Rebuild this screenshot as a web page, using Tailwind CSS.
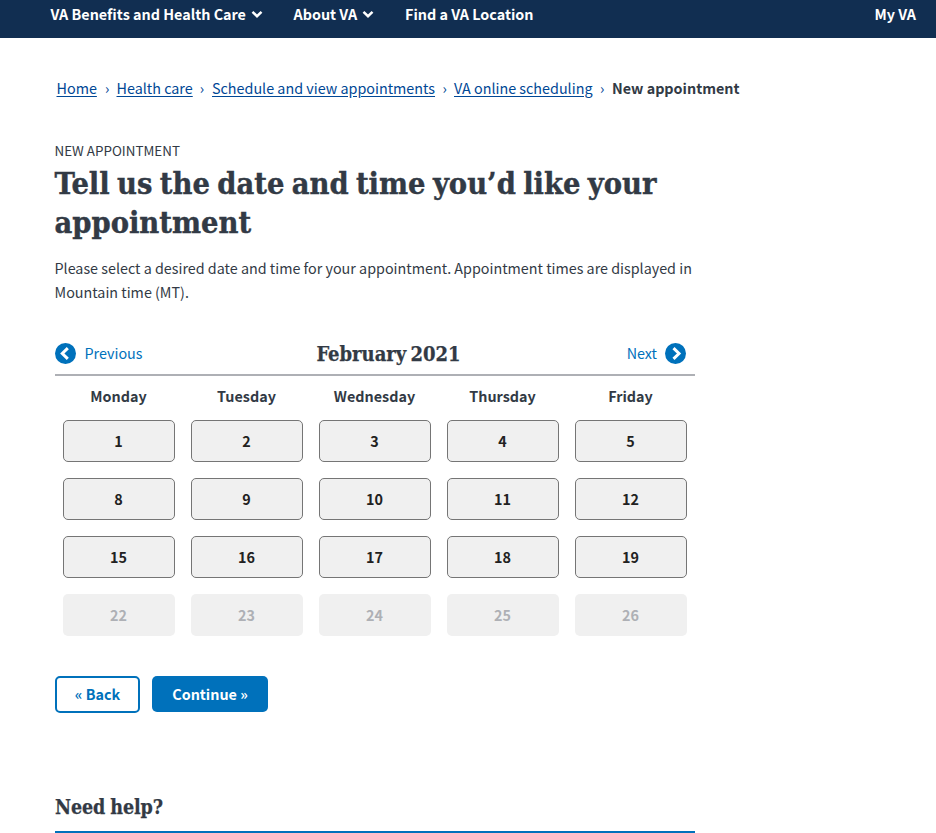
<!DOCTYPE html>
<html lang="en">
<head>
<meta charset="utf-8">
<title>New appointment</title>
<script src="https://cdn.jsdelivr.net/npm/@tailwindcss/browser@4"></script>
</head>
<body class="h-[833px] overflow-hidden bg-white font-['Noto_Sans_CJK_JP','Noto_Sans',sans-serif] text-[14.35px] leading-6 text-[#323a45]">
<header class="flex h-[38px] items-start bg-[#112e51] pl-[50.5px] pr-5 pt-[2px] font-bold text-white whitespace-nowrap">
  <nav class="flex flex-1">
    <a class="flex w-[243px] items-center"><span>VA Benefits and Health Care</span><svg class="ml-[5px] h-3 w-3" viewBox="0 0 12 12" fill="none" stroke="currentColor" stroke-width="2.5"><path d="M1.500 3.800 6 8.200l4.500-4.400"/></svg></a>
    <a class="flex w-[111.5px] items-center"><span>About VA</span><svg class="ml-[4.5px] h-3 w-3" viewBox="0 0 12 12" fill="none" stroke="currentColor" stroke-width="2.5"><path d="M1.500 3.800 6 8.200l4.500-4.400"/></svg></a>
    <a>Find a VA Location</a>
  </nav>
  <a>My VA</a>
</header>
<nav class="flex pl-[56.5px] pt-[38px] text-[#004795] whitespace-nowrap">
  <a class="w-[60px]"><span class="underline underline-offset-2">Home</span><span class="ml-2">›</span></a>
  <a class="w-[95.5px]"><span class="underline underline-offset-2">Health care</span><span class="ml-[7px]">›</span></a>
  <a class="w-[242px]"><span class="underline underline-offset-2">Schedule and view appointments</span><span class="ml-[7.5px]">›</span></a>
  <a class="w-[158px]"><span class="underline underline-offset-2">VA online scheduling</span><span class="ml-[7.5px]">›</span></a>
  <span class="font-bold text-[#323a45]">New appointment</span>
</nav>
<main class="ml-[55px] w-[640px] pt-[38px]">
  <p class="-ml-[0.5px] text-[13.4px]">NEW APPOINTMENT</p>
  <h1 class="-ml-[0.5px] pt-[2px] whitespace-nowrap font-['DejaVu_Serif_Condensed','DejaVu_Serif',serif] text-[30.5px] font-bold leading-[39px] [-webkit-text-stroke:0.4px_#323a45] [word-spacing:-2.2px]">Tell us the date and time you’d like your<br>appointment</h1>
  <p class="-ml-[0.5px] mt-[14px] whitespace-nowrap text-[14.33px]">Please select a desired date and time for your appointment. Appointment times are displayed in<br>Mountain time (MT).</p>
  <section class="mt-8">
    <div class="flex h-[40px] justify-between border-b-2 border-[#aeb0b5] pt-[2px]">
      <button class="flex h-[30px] w-[180px] items-center gap-2 text-[#0071bb]"><svg class="mt-px h-[22px] w-[22px]" viewBox="0 0 22 22"><circle cx="10.500" cy="10.500" r="10.500" fill="#0071bb"/><path d="M12.800 5.200 7.300 10.500l5.500 5.300" fill="none" stroke="#fff" stroke-width="3"/></svg><span class="-ml-[0.5px] -mt-px">Previous</span></button>
      <h2 class="pl-[27px] text-center whitespace-nowrap font-['DejaVu_Serif_Condensed','DejaVu_Serif',serif] text-[20px] font-bold leading-8 [-webkit-text-stroke:0.25px_#323a45] [word-spacing:-2px]">February 2021</h2>
      <button class="flex h-[30px] w-[180px] items-center justify-end gap-2 pr-2 text-[#0071bb]"><span class="-mt-px">Next</span><svg class="mt-px h-[22px] w-[22px]" viewBox="0 0 22 22"><circle cx="10.500" cy="10.500" r="10.500" fill="#0071bb"/><path d="m8.500 5.200 5.500 5.300-5.500 5.300" fill="none" stroke="#fff" stroke-width="3"/></svg></button>
    </div>
    <div class="grid grid-cols-5 pt-2 text-center font-bold -indent-px"><span>Monday</span><span>Tuesday</span><span>Wednesday</span><span>Thursday</span><span>Friday</span></div>
    <div class="mt-3 grid grid-cols-5 gap-4 px-2 text-[#212121] [&>button]:h-[42px] [&>button]:rounded-[5px] [&>button]:border [&>button]:border-[#757575] [&>button]:bg-[#f0f0f0] [&>button]:font-bold [&>button]:-indent-px [&>button:disabled]:border-transparent [&>button:disabled]:text-[#aeb0b5]">
      <button>1</button><button>2</button><button>3</button><button>4</button><button>5</button>
      <button>8</button><button>9</button><button>10</button><button>11</button><button>12</button>
      <button>15</button><button>16</button><button>17</button><button>18</button><button>19</button>
      <button disabled>22</button><button disabled>23</button><button disabled>24</button><button disabled>25</button><button disabled>26</button>
    </div>
  </section>
  <div class="mt-10 flex gap-3 whitespace-nowrap font-bold">
    <button class="h-[37px] w-[85px] rounded-[5px] border-2 border-[#0071bb] pb-px text-[#0071bb]">« Back</button>
    <button class="h-[36px] w-[116px] rounded-[5px] bg-[#0071bb] text-white">Continue »</button>
  </div>
  <h2 class="mt-[78px] h-[42px] border-b-2 border-[#0071bb] pt-px font-['DejaVu_Serif_Condensed','DejaVu_Serif',serif] text-[19.5px] font-bold leading-[31px] tracking-[-0.1px] [-webkit-text-stroke:0.25px_#323a45] [word-spacing:-1px]">Need help?</h2>
</main>
</body>
</html>
